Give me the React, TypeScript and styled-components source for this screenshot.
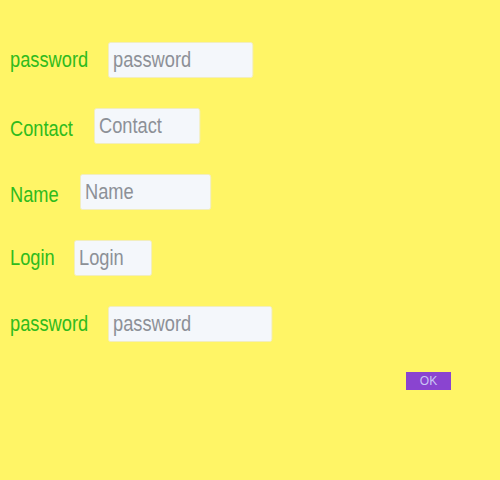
import React from "react";
import styled, { createGlobalStyle } from "styled-components";

const SCALE = 0.83;

const Global = createGlobalStyle`
  html, body { margin: 0; padding: 0; background: #fff566; }
  body { font-family: "Liberation Sans", Arial, sans-serif; }
`;

const Page = styled.div`
  width: 500px;
  height: 480px;
  background: #fff566;
  box-sizing: border-box;
  padding: 42px 0 0 10px;
  display: flex;
  flex-direction: column;
  gap: 30px;
`;

const Row = styled.div`
  display: flex;
  align-items: center;
  height: 36px;
`;

const LabelCell = styled.label<{ $w: number; $dy: number }>`
  flex: none;
  width: ${(p) => p.$w}px;
  height: 36px;
  position: relative;
  top: ${(p) => p.$dy}px;
  white-space: nowrap;
`;

const LabelText = styled.span`
  display: inline-block;
  font-size: 22px;
  line-height: 36px;
  color: #2fbb1c;
  transform: scaleX(${SCALE});
  transform-origin: left center;
`;

const FieldCell = styled.div<{ $w: number }>`
  flex: none;
  width: ${(p) => p.$w}px;
  height: 36px;
`;

const Field = styled.input<{ $w: number }>`
  box-sizing: border-box;
  width: ${(p) => p.$w / SCALE}px;
  height: 36px;
  margin: 0;
  padding: 0 5px;
  border: 1px solid #f1ecc0;
  border-radius: 3px;
  background: #f4f7fb;
  font-family: "Liberation Sans", Arial, sans-serif;
  font-size: 22px;
  color: #333;
  outline: none;
  transform: scaleX(${SCALE});
  transform-origin: left center;
  &::placeholder { color: #8c9097; }
`;

const Footer = styled.div`
  display: flex;
  padding-left: 396px;
`;

const OkButton = styled.button`
  width: 45px;
  height: 18px;
  padding: 0;
  border: none;
  background: #8a44d0;
  color: #c9c5f5;
  font-family: "Liberation Sans", Arial, sans-serif;
  font-size: 12px;
  line-height: 18px;
`;

const fields = [
  { label: "password", width: 145, cell: 98, dy: 0 },
  { label: "Contact", width: 106, cell: 84, dy: 3 },
  { label: "Name", width: 131, cell: 70, dy: 3 },
  { label: "Login", width: 78, cell: 64, dy: 0 },
  { label: "password", width: 164, cell: 98, dy: 0 },
];

export default function App() {
  return (
    <>
      <Global />
      <Page>
        {fields.map((f, i) => (
          <Row key={i}>
            <LabelCell $w={f.cell} $dy={f.dy}>
              <LabelText>{f.label}</LabelText>
            </LabelCell>
            <FieldCell $w={f.width}>
              <Field $w={f.width} placeholder={f.label} />
            </FieldCell>
          </Row>
        ))}
        <Footer>
          <OkButton>OK</OkButton>
        </Footer>
      </Page>
    </>
  );
}
